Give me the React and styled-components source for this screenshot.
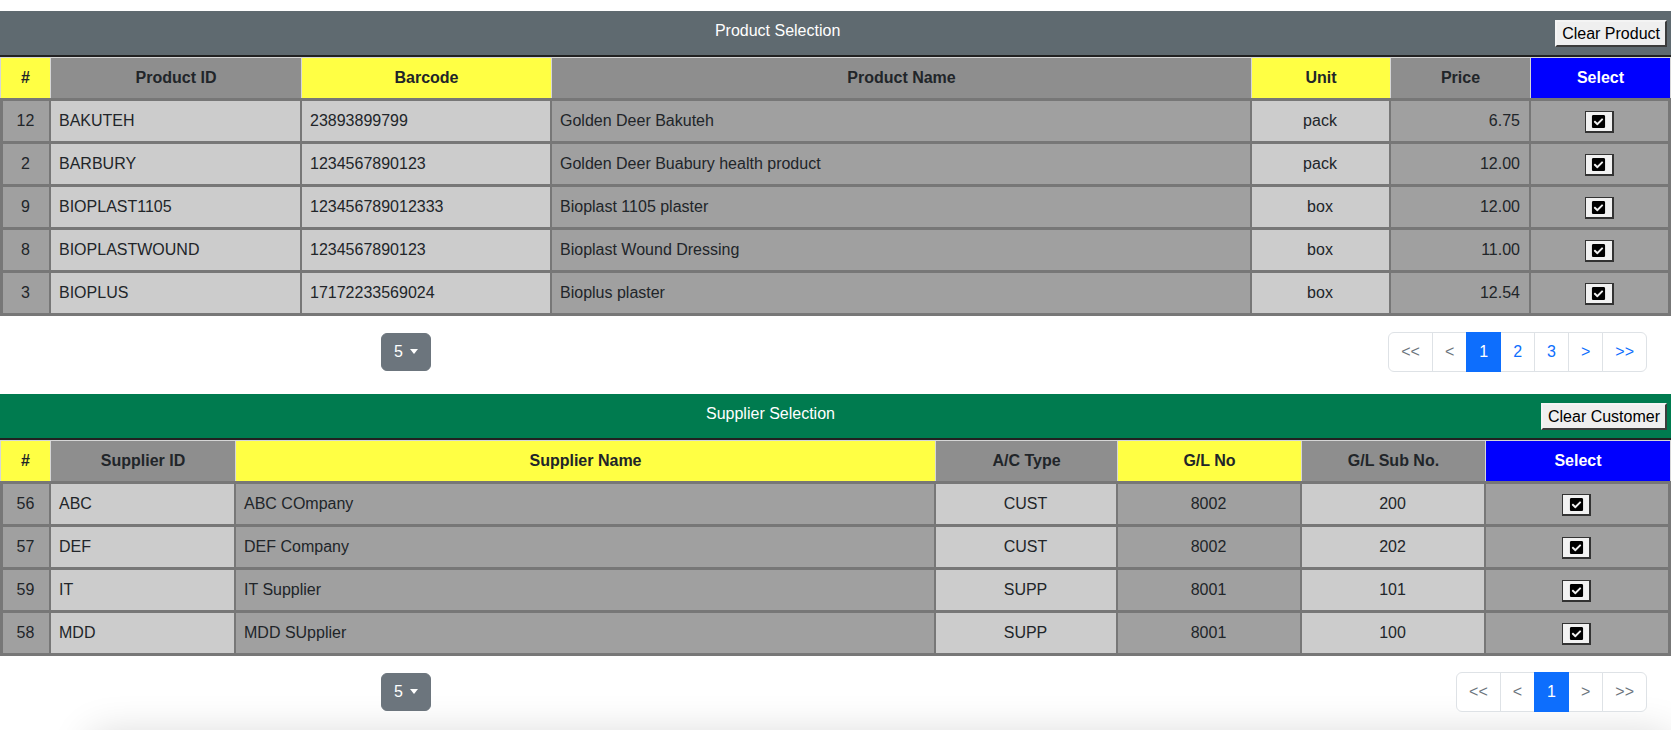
import React from "react";
import styled, { createGlobalStyle } from "styled-components";
import { FaCheckSquare } from "react-icons/fa";

const GlobalStyle = createGlobalStyle`
  html, body {
    margin: 0;
    padding: 0;
    background: #fff;
    font-family: "Liberation Sans", Arial, Helvetica, sans-serif;
    color: #212529;
  }
`;

const Page = styled.div`
  padding-top: 11px;
  overflow: hidden;
`;

const Section = styled.section`
  margin-bottom: 22px;
`;

const TitleBar = styled.div`
  display: flex;
  align-items: flex-start;
  height: 46px;
  padding: 8px 4px 0 0;
  box-sizing: border-box;
  background: ${(p) => p.$bg};
  border-bottom: 2px solid #212121;
`;

const Title = styled.div`
  flex: 1;
  text-align: center;
  color: #fff;
  font-size: 16px;
  line-height: 24px;
`;

const ClearButton = styled.button`
  font-family: "Liberation Sans", Arial, sans-serif;
  font-size: 16px;
  line-height: 19px;
  padding: 2px 5px;
  margin-top: 1px;
  color: #000;
  background: #efefef;
  border: 2px solid;
  border-color: #f4f4f4 #3c3c3c #3c3c3c #f4f4f4;
`;

const Table = styled.table`
  width: 100%;
  table-layout: fixed;
  border-collapse: separate;
  border-spacing: 0;
  font-size: 16px;
`;

const headBg = {
  yellow: "#ffff44",
  gray: "#8e8e8e",
  blue: "#0000ff",
};

const HeadCell = styled.th`
  height: 40px;
  padding: 0 8px;
  background: ${(p) => headBg[p.$tone]};
  color: ${(p) => (p.$tone === "blue" ? "#fff" : "#212529")};
  font-weight: bold;
  text-align: center;
  border-top: 1px solid #d6d6d6;
  border-right: 1px solid #d6d6d6;
  &:first-child {
    border-left: 1px solid #d6d6d6;
  }
`;

const Row = styled.tr`
  &:last-child td {
    border-bottom: 3px solid #777;
  }
`;

const Cell = styled.td`
  height: 40px;
  padding: 0 9px 0 8px;
  background: ${(p) => (p.$shade === "light" ? "#cccccc" : "#a0a0a0")};
  text-align: ${(p) => p.$align};
  border-top: 3px solid #777;
  border-right: 2px solid #777;
  white-space: nowrap;
  overflow: hidden;
  &:first-child {
    border-left: 3px solid #777;
  }
  &:last-child {
    border-right: 3px solid #777;
  }
`;

const SelectButton = styled.button`
  display: inline-flex;
  align-items: center;
  justify-content: center;
  width: 29px;
  height: 22px;
  padding: 0;
  margin-top: 2px;
  vertical-align: middle;
  background: #f2f2f2;
  border: 1px solid #333;
  border-right-width: 2px;
  border-bottom-width: 2px;
  color: #000;
  svg {
    width: 15px;
    height: 15px;
  }
`;

const Footer = styled.div`
  display: flex;
  justify-content: space-between;
  align-items: center;
  padding: 16px 24px 0 381px;
`;

const SizeToggle = styled.button`
  font-family: "Liberation Sans", Arial, sans-serif;
  font-size: 16px;
  line-height: 24px;
  padding: 6px 12px;
  color: #fff;
  background: #6c757d;
  border: 1px solid #6c757d;
  border-radius: 6px;
  &::after {
    content: "";
    display: inline-block;
    margin-left: 7px;
    vertical-align: 3px;
    border-top: 5px solid #fff;
    border-left: 4.5px solid transparent;
    border-right: 4.5px solid transparent;
  }
`;

const Pager = styled.ul`
  display: flex;
  list-style: none;
  margin: 0;
  padding: 0;
`;

const PageItem = styled.li`
  font-size: 16px;
  line-height: 24px;
  padding: 7px 12px;
  margin-left: -1px;
  border: 1px solid #dee2e6;
  color: ${(p) => (p.$active ? "#fff" : p.$disabled ? "#6c757d" : "#0d6efd")};
  background: ${(p) => (p.$active ? "#0d6efd" : "#fff")};
  border-color: ${(p) => (p.$active ? "#0d6efd" : "#dee2e6")};
  position: relative;
  z-index: ${(p) => (p.$active ? 1 : 0)};
  &:first-child {
    margin-left: 0;
    border-radius: 6px 0 0 6px;
  }
  &:last-child {
    border-radius: 0 6px 6px 0;
  }
`;

const ShadowCard = styled.div`
  margin: 6px 0 0 90px;
  height: 200px;
  border-radius: 10px;
  background: #fff;
  box-shadow: 0 0 40px rgba(0, 0, 0, 0.16);
`;

const productColumns = [
  { key: "no", label: "#", width: 51, tone: "yellow", shade: "dark", align: "center" },
  { key: "id", label: "Product ID", width: 251, tone: "gray", shade: "light", align: "left" },
  { key: "barcode", label: "Barcode", width: 250, tone: "yellow", shade: "light", align: "left" },
  { key: "name", label: "Product Name", width: 700, tone: "gray", shade: "dark", align: "left" },
  { key: "unit", label: "Unit", width: 139, tone: "yellow", shade: "light", align: "center" },
  { key: "price", label: "Price", width: 140, tone: "gray", shade: "dark", align: "right" },
  { key: "select", label: "Select", width: 140, tone: "blue", shade: "dark", align: "center" },
];

const products = [
  { no: 12, id: "BAKUTEH", barcode: "23893899799", name: "Golden Deer Bakuteh", unit: "pack", price: "6.75" },
  { no: 2, id: "BARBURY", barcode: "1234567890123", name: "Golden Deer Buabury health product", unit: "pack", price: "12.00" },
  { no: 9, id: "BIOPLAST1105", barcode: "123456789012333", name: "Bioplast 1105 plaster", unit: "box", price: "12.00" },
  { no: 8, id: "BIOPLASTWOUND", barcode: "1234567890123", name: "Bioplast Wound Dressing", unit: "box", price: "11.00" },
  { no: 3, id: "BIOPLUS", barcode: "17172233569024", name: "Bioplus plaster", unit: "box", price: "12.54" },
];

const supplierColumns = [
  { key: "no", label: "#", width: 51, tone: "yellow", shade: "dark", align: "center" },
  { key: "id", label: "Supplier ID", width: 185, tone: "gray", shade: "light", align: "left" },
  { key: "name", label: "Supplier Name", width: 700, tone: "yellow", shade: "dark", align: "left" },
  { key: "type", label: "A/C Type", width: 182, tone: "gray", shade: "light", align: "center" },
  { key: "gl", label: "G/L No", width: 184, tone: "yellow", shade: "dark", align: "center" },
  { key: "sub", label: "G/L Sub No.", width: 184, tone: "gray", shade: "light", align: "center" },
  { key: "select", label: "Select", width: 185, tone: "blue", shade: "dark", align: "center" },
];

const suppliers = [
  { no: 56, id: "ABC", name: "ABC COmpany", type: "CUST", gl: "8002", sub: "200" },
  { no: 57, id: "DEF", name: "DEF Company", type: "CUST", gl: "8002", sub: "202" },
  { no: 59, id: "IT", name: "IT Supplier", type: "SUPP", gl: "8001", sub: "101" },
  { no: 58, id: "MDD", name: "MDD SUpplier", type: "SUPP", gl: "8001", sub: "100" },
];

function DataTable({ columns, rows }) {
  return (
    <Table>
      <colgroup>
        {columns.map((c) => (
          <col key={c.key} style={{ width: c.width }} />
        ))}
      </colgroup>
      <thead>
        <tr>
          {columns.map((c) => (
            <HeadCell key={c.key} $tone={c.tone}>
              {c.label}
            </HeadCell>
          ))}
        </tr>
      </thead>
      <tbody>
        {rows.map((r) => (
          <Row key={r.no}>
            {columns.map((c) => (
              <Cell key={c.key} $shade={c.shade} $align={c.align}>
                {c.key === "select" ? (
                  <SelectButton>
                    <FaCheckSquare />
                  </SelectButton>
                ) : (
                  r[c.key]
                )}
              </Cell>
            ))}
          </Row>
        ))}
      </tbody>
    </Table>
  );
}

function Pagination({ pages, canNext }) {
  return (
    <Pager>
      <PageItem $disabled>&lt;&lt;</PageItem>
      <PageItem $disabled>&lt;</PageItem>
      {pages.map((p) => (
        <PageItem key={p} $active={p === 1}>
          {p}
        </PageItem>
      ))}
      <PageItem $disabled={!canNext}>&gt;</PageItem>
      <PageItem $disabled={!canNext}>&gt;&gt;</PageItem>
    </Pager>
  );
}

function SelectionPanel({ title, bg, clearLabel, columns, rows, pages }) {
  return (
    <Section>
      <TitleBar $bg={bg}>
        <Title>{title}</Title>
        <ClearButton>{clearLabel}</ClearButton>
      </TitleBar>
      <DataTable columns={columns} rows={rows} />
      <Footer>
        <SizeToggle>5</SizeToggle>
        <Pagination pages={pages} canNext={pages.length > 1} />
      </Footer>
    </Section>
  );
}

export default function App() {
  return (
    <Page>
      <GlobalStyle />
      <SelectionPanel
        title="Product Selection"
        bg="#5f6a70"
        clearLabel="Clear Product"
        columns={productColumns}
        rows={products}
        pages={[1, 2, 3]}
      />
      <SelectionPanel
        title="Supplier Selection"
        bg="#007b4f"
        clearLabel="Clear Customer"
        columns={supplierColumns}
        rows={suppliers}
        pages={[1]}
      />
      <ShadowCard />
    </Page>
  );
}
